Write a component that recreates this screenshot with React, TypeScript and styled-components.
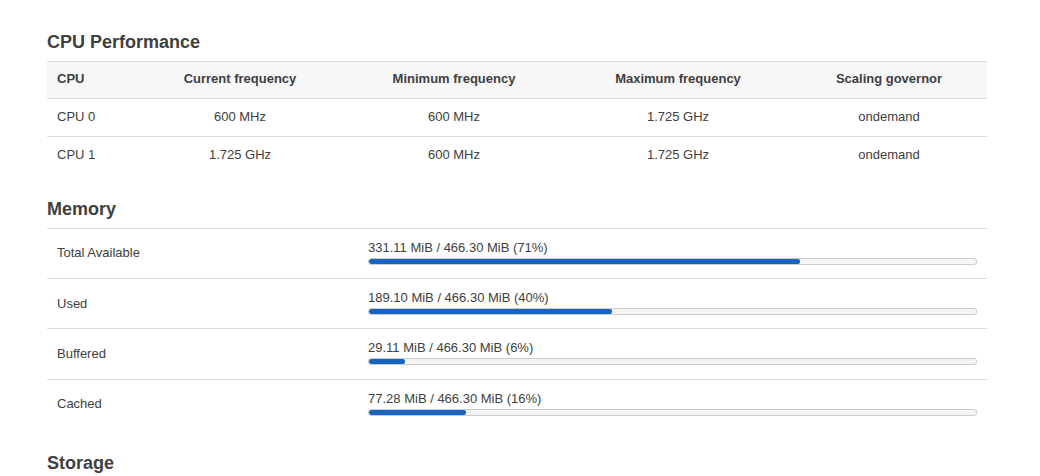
import React from 'react';
import styled, { createGlobalStyle } from 'styled-components';

const GlobalStyle = createGlobalStyle`
  body {
    margin: 0;
    background: #fff;
    font-family: "Liberation Sans", Arial, sans-serif;
    color: #404040;
  }
  *, *::before, *::after {
    box-sizing: border-box;
  }
`;

const Page = styled.div`
  padding: 32px 53px 0 47px;
`;

const Section = styled.section`
  margin-bottom: 24px;
`;

const Title = styled.h3`
  margin: 0 0 9px;
  font-size: 18px;
  line-height: 20px;
  font-weight: bold;
  color: #404040;
`;

const Table = styled.table`
  width: 100%;
  border-collapse: collapse;
  font-size: 13px;
  table-layout: fixed;
`;

const HeadCell = styled.th<{ $left?: boolean; $w: number }>`
  width: ${(p) => p.$w}px;
  background: #f7f7f7;
  border-top: 1px solid #ddd;
  height: 37px;
  padding: 0 10px 3px;
  font-weight: bold;
  text-align: ${(p) => (p.$left ? 'left' : 'center')};
  color: #404040;
`;

const Cell = styled.td<{ $left?: boolean }>`
  border-top: 1px solid #ddd;
  height: 38px;
  padding: 0 10px 2px;
  text-align: ${(p) => (p.$left ? 'left' : 'center')};
`;

const MemRow = styled.div`
  display: grid;
  grid-template-columns: 311px 1fr;
  border-top: 1px solid #ddd;
  height: 50.4px;
  font-size: 13px;
`;

const MemLabel = styled.div`
  display: flex;
  align-items: center;
  padding: 0 10px 1px;
`;

const MemValue = styled.div`
  padding: 11px 10px 0;
`;

const ValueText = styled.div`
  line-height: 16px;
`;

const Track = styled.div`
  margin-top: 2px;
  height: 7px;
  border: 1px solid #ccc;
  border-radius: 3px;
  background: #f5f5f5;
  overflow: hidden;
`;

const Fill = styled.div`
  height: 100%;
  background: #1565c0;
  border-radius: 2px;
`;

const cpus = [
  ['CPU 0', '600 MHz', '600 MHz', '1.725 GHz', 'ondemand'],
  ['CPU 1', '1.725 GHz', '600 MHz', '1.725 GHz', 'ondemand'],
];

const columns: [string, number][] = [
  ['CPU', 90],
  ['Current frequency', 206],
  ['Minimum frequency', 222],
  ['Maximum frequency', 226],
  ['Scaling governor', 196],
];

const memory = [
  { label: 'Total Available', used: '331.11', pct: 71 },
  { label: 'Used', used: '189.10', pct: 40 },
  { label: 'Buffered', used: '29.11', pct: 6 },
  { label: 'Cached', used: '77.28', pct: 16 },
];

export default function App() {
  return (
    <>
      <GlobalStyle />
      <Page>
        <Section>
          <Title>CPU Performance</Title>
          <Table>
            <thead>
              <tr>
                {columns.map(([name, w], i) => (
                  <HeadCell key={name} $w={w} $left={i === 0}>
                    {name}
                  </HeadCell>
                ))}
              </tr>
            </thead>
            <tbody>
              {cpus.map((row) => (
                <tr key={row[0]}>
                  {row.map((v, i) => (
                    <Cell key={i} $left={i === 0}>
                      {v}
                    </Cell>
                  ))}
                </tr>
              ))}
            </tbody>
          </Table>
        </Section>
        <Section>
          <Title>Memory</Title>
          {memory.map((m) => (
            <MemRow key={m.label}>
              <MemLabel>{m.label}</MemLabel>
              <MemValue>
                <ValueText>
                  {m.used} MiB / 466.30 MiB ({m.pct}%)
                </ValueText>
                <Track>
                  <Fill style={{ width: `${m.pct}%` }} />
                </Track>
              </MemValue>
            </MemRow>
          ))}
        </Section>
        <Section>
          <Title>Storage</Title>
        </Section>
      </Page>
    </>
  );
}
